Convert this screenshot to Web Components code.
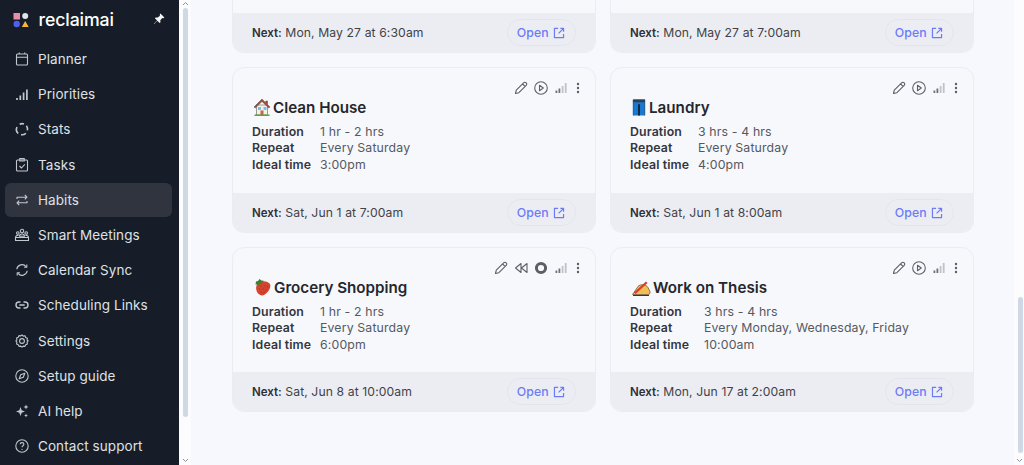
<!DOCTYPE html>
<html>
<head>
<meta charset="utf-8">
<title>Habits</title>
<style>
    html, body { margin: 0; height: 100%; overflow: hidden; }
    body { font-family: Inter, "Liberation Sans", sans-serif; background: #f6f8fd; }
</style>
</head>
<body>
<rm-app></rm-app>

<script>
const ICONS = {
    planner: '<rect x="2.500" y="3" width="11" height="11" rx="1"/><path d="M2.500 6.200h11M5.300 1.500V3M10.700 1.500V3"/>',
    priorities: '<path stroke-width="1.700" d="M3 14v-2M6.300 14V9.500M9.600 14V6.500M12.900 14V3.500"/>',
    stats: '<path stroke-width="1.600" d="M5.700 3.200A5.600 5.600 0 0 1 10 2.900M12.400 4.800a5.600 5.600 0 0 1 1 4.500M11.900 12.200a5.600 5.600 0 0 1-4.900 1.500M4.200 12.500A5.600 5.600 0 0 1 3 6"/>',
    tasks: '<rect x="2.500" y="3" width="11" height="11" rx="1"/><path d="M5.700 1.600h4.600V4H5.700zM5.500 9l2 2 3.300-3.600"/>',
    habits: '<path d="M3 7V5.200h9.500M10.800 3l2.200 2.200-2.200 2.200M13 9v1.800H3.500M5.200 13 3 10.800l2.200-2.200"/>',
    meetings: '<circle cx="8" cy="4" r="1.700"/><circle cx="3.800" cy="6" r="1.300"/><circle cx="12.200" cy="6" r="1.300"/><path d="M5.500 9.300c0-3 5-3 5 0zM1.500 10.500c0-1.800 1.600-2.400 3-2M14.500 10.500c0-1.800-1.600-2.400-3-2M1.500 10.500h13v3h-13z"/>',
    sync: '<path d="M2.800 7.200A5.200 5.200 0 0 1 12 4.600M13.200 8.800A5.200 5.200 0 0 1 4 11.400"/><path d="M12.800 2.500v2.700h-2.700M3.200 13.500v-2.700h2.700"/>',
    links: '<path stroke-width="1.400" d="M6.500 5H5a3 3 0 0 0 0 6h1.500M9.500 5H11a3 3 0 0 1 0 6H9.500M5.300 8h5.400"/>',
    settings: '<path d="m8 1.800 1.200 1.300 1.800-.3.700 1.700 1.700.7-.3 1.800L14.200 8l-1.100 1.200.3 1.800-1.700.7-.7 1.700-1.800-.3L8 14.200l-1.200-1.100-1.800.3-.7-1.700-1.700-.7.3-1.800L1.800 8l1.100-1.200-.3-1.800 1.700-.7.7-1.700 1.800.3z"/><circle cx="8" cy="8" r="2.400"/>',
    guide: '<circle cx="8" cy="8" r="6.200"/><path d="m10.800 5.200-1.500 4.100-4.100 1.500 1.500-4.100z"/>',
    ai: '<path fill="currentColor" stroke="none" d="m6.500 4 1.200 3.300L11 8.500 7.700 9.700 6.500 13 5.300 9.700 2 8.500l3.300-1.200zM12 1.500l.7 1.800 1.800.7-1.800.7-.7 1.800-.7-1.800-1.800-.7 1.800-.7zM12 10.500l.6 1.400 1.400.6-1.400.6-.6 1.400-.6-1.400-1.400-.6 1.400-.6z"/>',
    support: '<circle cx="8" cy="8" r="6.200"/><path d="M6.200 6.300C6.300 4 9.900 4.200 9.900 6.300c0 1.500-1.900 1.500-1.900 3"/><path stroke-linecap="round" d="M8 11.300v.1"/>',
    pencil: '<path d="m2.500 13.500.8-3.400 7.300-7.300a1.600 1.600 0 0 1 2.600 2.600l-7.300 7.300zM9.500 3.900l2.600 2.600"/>',
    play: '<circle cx="8" cy="8" r="6.300"/><path d="m6.500 5.300 3.800 2.700-3.800 2.700z"/>',
    rewind: '<path d="M8 3.500 2.500 8 8 12.500zM14 3.500 8.500 8l5.500 4.500z"/>',
    stop: '<circle cx="8" cy="8" r="4.600" stroke-width="3"/>',
    open: '<path stroke-width="1.400" d="M7 2.800H2.800v10.400h10.400V9"/><path stroke-width="1.400" d="M9.500 2.800h3.700v3.700M13 3 7.500 8.500"/>'
};

const svgIcon = (name, size) =>
    `<svg width="${size}" height="${size}" viewBox="0 0 16 16" fill="none" stroke="currentColor" stroke-width="1.100" stroke-linejoin="round">${ICONS[name]}</svg>`;

const EMOJI = {
    house: `<svg width="18" height="18" viewBox="0 0 18 18"><rect x="3.500" y="7" width="11" height="10" fill="#f4f1ea" stroke="#6a5d50" stroke-width=".6"/><path d="M9 1 1 9l1.200 1L9 3.500 15.800 10 17 9l-2.500-2.400V3h-1.800v1.900z" fill="#a5493a" stroke="#5b4a3e" stroke-width=".5"/><rect x="5" y="9" width="3" height="3" fill="#6ec3ea"/><rect x="10.500" y="9" width="3" height="3" fill="#6ec3ea"/><rect x="7.500" y="12.500" width="3" height="4.500" fill="#d65f42"/><rect x="1.500" y="16.500" width="15" height="1.500" fill="#4ea93f"/></svg>`,
    jeans: `<svg width="16" height="18" viewBox="0 0 17 18"><rect x="2" y="1" width="13" height="17" rx="1" fill="#1b78d0"/><rect x="2" y="1" width="13" height="3" fill="#2b3f55"/><path d="M7.500 6h2v12h-2z" fill="#12253a"/><path d="M2 4h1v14H2zM14 4h1v14h-1z" fill="#2f5f95"/></svg>`,
    berry: `<svg width="19" height="19" viewBox="0 0 19 19"><path d="M5 5c4-3 10-2 12 1 1.500 3-2 9-6 11-2 1-5.500 0-7-3C2.500 11 2.800 7 5 5z" fill="#d5442c"/><g fill="#8a2a1c"><circle cx="8" cy="8" r=".5"/><circle cx="12" cy="8" r=".5"/><circle cx="14.500" cy="9" r=".5"/><circle cx="6.500" cy="11" r=".5"/><circle cx="10" cy="11" r=".5"/><circle cx="13" cy="12" r=".5"/><circle cx="8" cy="14" r=".5"/><circle cx="11" cy="14.500" r=".5"/></g><path d="M2.500 6.500 3 3.500l2-.5L6.500 1l2 1.500 2.300.2-1.800 2-1.500.5-1.500 1.800-1.500-.8z" fill="#3f7f35"/></svg>`,
    thesis: `<svg width="20" height="19" viewBox="0 0 20 19"><path d="M1.500 16.500 7 8.500c2-2.500 8-2.500 10 1l2 4c.3 2-.5 3-2 3z" fill="#f3bd52" stroke="#5b4a38" stroke-width=".7"/><path d="m3 14.500 12-11 1.500 1.500-12 11z" fill="#d73a2c"/><path d="M2 17.500h16" stroke="#3e3530" stroke-width="1"/></svg>`
};

customElements.define("rm-nav-item", class extends HTMLElement {
    constructor() {
        super();
        this.attachShadow({ mode: 'open' });
    }

    connectedCallback() {
        this.shadowRoot.innerHTML = `
            <style>
                :host { display: flex; height: 35.2px; align-items: center; padding: 0 7px 0 5px; }
                #fila {
                    flex: 1; height: 34px; display: flex; align-items: center; gap: 8px;
                    padding-left: 9px; border-radius: 6px; color: #dfe1e5;
                }
                :host([active]) #fila { background: #30343e; }
                svg { color: #c3c6cc; flex: none; }
                span { font-size: 13.5px; letter-spacing: .08px; white-space: nowrap; }
            </style>
            <div id="fila">${svgIcon(this.getAttribute("icon"), 16)}<span><slot></slot></span></div>
        `;
    }
});

customElements.define("rm-sidebar", class extends HTMLElement {
    constructor() {
        super();
        this.attachShadow({ mode: 'open' });
    }

    connectedCallback() {
        this.shadowRoot.innerHTML = `
            <style>
                :host { display: block; width: 179px; flex: none; background: #171d28; overflow: hidden; }
                #logo { display: flex; align-items: center; height: 41.5px; padding-left: 13px; }
                #marca { color: #fff; font-size: 17.7px; font-weight: 500; letter-spacing: -.1px; margin-left: 9.5px; margin-top: -2px; flex: 1; }
                #pin { margin: -4px 14px 0 0; color: #f4f4f4; }
            </style>
            <div id="logo">
                <svg width="16" height="15" viewBox="0 0 16 15">
                    <rect x="0.500" y="0" width="6.500" height="6.500" fill="#e98ea8"/>
                    <circle cx="12.200" cy="3" r="3" fill="#dfe3ea"/>
                    <circle cx="3.700" cy="11" r="3.200" fill="#4f5ff0"/>
                    <path d="M12.200 8 15.700 14H8.800z" fill="#f5b53a"/>
                </svg>
                <span id="marca">reclaimai</span>
                <svg id="pin" width="12" height="12" viewBox="0 0 12 12" fill="currentColor">
                    <path d="M7.400.6 11.400 4.600 10.300 5.300 9.300 5 7.300 7.300 7.500 9.200 6.600 10 4.300 7.700 1.200 11 .9 10.700 4.100 7.500 1.900 5.300 2.700 4.400 4.700 4.600 7 2.700 6.700 1.700z"/>
                </svg>
            </div>
            <slot></slot>
        `;
    }
});

customElements.define("rm-scrollbar", class extends HTMLElement {
    constructor() {
        super();
        this.attachShadow({ mode: 'open' });
    }

    connectedCallback() {
        const inicio = this.getAttribute("inicio");
        const alto = this.getAttribute("alto");
        const flechas = this.hasAttribute("flechas");
        this.shadowRoot.innerHTML = `
            <style>
                :host {
                    display: block; flex: none; position: relative; background: #fcfcfe;
                    box-sizing: border-box; padding-top: ${inicio}px;
                }
                #thumb { height: ${alto}px; width: 5px; margin-left: var(--thumb-left, 4px); background: #cfd9e6; border-radius: 3px; }
                svg { position: absolute; left: var(--arrow-left, 3px); color: #8d9097; }
                #arriba { top: 1px; }
                #abajo { bottom: 2px; }
            </style>
            <div id="thumb"></div>
            ${flechas ? `<svg id="arriba" width="7" height="5" viewBox="0 0 7 5" fill="none" stroke="currentColor"><path d="M1 4 3.500 1.500 6 4"/></svg>` : ""}
            <svg id="abajo" width="7" height="5" viewBox="0 0 7 5" fill="none" stroke="currentColor"><path d="M1 1 3.500 3.500 6 1"/></svg>
        `;
    }
});

customElements.define("rm-open-button", class extends HTMLElement {
    constructor() {
        super();
        this.attachShadow({ mode: 'open' });
    }

    connectedCallback() {
        this.shadowRoot.innerHTML = `
            <style>
                :host {
                    display: inline-flex; align-items: center; gap: 3.500px; height: 27px; box-sizing: border-box;
                    width: 69px; justify-content: center; border: 1px solid #e3e5ec; border-radius: 14px;
                    color: #6b7cf6; font-size: 12.3px; font-weight: 500;
                }
            </style>
            Open ${svgIcon("open", 14)}
        `;
    }
});

customElements.define("rm-habit-card", class extends HTMLElement {
    constructor() {
        super();
        this.attachShadow({ mode: 'open' });
    }

    connectedCallback() {
        const d = (n) => this.getAttribute(n) || "";
        const acciones = d("acciones").split(" ").filter(Boolean);
        const partes = d("next").split("|");
        const cuerpo = this.hasAttribute("cortada") ? "" : `
            <div id="acciones">
                ${acciones.map(a => `<span class="ico">${svgIcon(a, 16)}</span>`).join("")}
                <svg class="barras" width="12" height="12" viewBox="0 0 12 12">
                    <path d="M.5 8.500h1.800V11H.5zM3.500 6.500h1.800V11H3.500z" fill="#6d7078"/>
                    <path d="M6.700 4h1.800v7H6.700zM9.800 1h1.800v10H9.800z" fill="#bfc2c9"/>
                </svg>
                <svg class="puntos" width="4" height="12" viewBox="0 0 4 12" fill="#5c5f67">
                    <circle cx="2" cy="2" r="1.200"/><circle cx="2" cy="6" r="1.200"/><circle cx="2" cy="10" r="1.200"/>
                </svg>
            </div>
            <h3>${EMOJI[d("emoji")]}<span>${d("titulo")}</span></h3>
            <div id="datos">
                <b>Duration</b><span>${d("duracion")}</span>
                <b>Repeat</b><span>${d("repite")}</span>
                <b>Ideal time</b><span>${d("hora")}</span>
            </div>
        `;
        this.shadowRoot.innerHTML = `
            <style>
                :host {
                    display: flex; flex-direction: column; box-sizing: border-box; min-width: 0;
                    background: #f7f8fc; border: 1px solid #eaecf1; border-radius: 12px; overflow: hidden;
                    color: #33363d; font-size: 13px;
                }
                :host([cortada]) { border-top: 0; border-radius: 0 0 12px 12px; }
                #cuerpo { flex: 1; padding: 0 0 0 19px; min-height: 0; }
                #acciones {
                    display: flex; justify-content: flex-end; align-items: center; height: 14px;
                    margin-top: 13px; padding-right: 15px; color: #5c5f67;
                }
                .ico { width: 20px; display: flex; justify-content: center; }
                .barras { margin-left: 4px; }
                .puntos { margin-left: 9px; }
                h3 {
                    margin: 0 0 0 1px; height: 24px; display: flex; align-items: center; gap: 2px;
                    font-size: 15.2px; font-weight: 600; color: #25272d;
                }
                h3 svg { flex: none; }
                #datos {
                    display: grid; grid-template-columns: var(--etiqueta, 68px) 1fr; grid-auto-rows: 16.5px;
                    align-items: center; margin-top: 4px; font-size: 12.3px; letter-spacing: .15px; color: #55585f;
                }
                #datos b { font-weight: 600; color: #33363d; }
                #pie {
                    height: 39px; flex: none; display: flex; align-items: center; justify-content: space-between;
                    background: #ecedf2; padding: 0 19px; font-size: 12.2px; letter-spacing: .1px; color: #3f4249;
                }
                #pie b { font-weight: 600; color: #2c2f36; font-size: 11.5px; letter-spacing: 0; }
            </style>
            <div id="cuerpo">${cuerpo}</div>
            <div id="pie">
                <span><b>${partes[0]}</b> ${partes[1]}</span>
                <rm-open-button></rm-open-button>
            </div>
        `;
    }
});

customElements.define("rm-app", class extends HTMLElement {
    constructor() {
        super();
        this.attachShadow({ mode: 'open' });
    }

    connectedCallback() {
        this.shadowRoot.innerHTML = `
            <style>
                :host { display: flex; height: 465px; width: 1024px; background: #f6f8fd; overflow: hidden; }
                #lateral { width: 12px; }
                #principal { width: 10px; --thumb-left: 4px; --arrow-left: 2px; }
                main {
                    flex: 1; min-width: 0; padding: 0 40px 0 41px; display: grid;
                    grid-template-columns: 1fr 1fr; grid-template-rows: 53px 166px 165px;
                    gap: 14px; align-content: start;
                }
                .ancha { --etiqueta: 74px; }
            </style>
            <rm-sidebar>
                <rm-nav-item icon="planner">Planner</rm-nav-item>
                <rm-nav-item icon="priorities">Priorities</rm-nav-item>
                <rm-nav-item icon="stats">Stats</rm-nav-item>
                <rm-nav-item icon="tasks">Tasks</rm-nav-item>
                <rm-nav-item icon="habits" active>Habits</rm-nav-item>
                <rm-nav-item icon="meetings">Smart Meetings</rm-nav-item>
                <rm-nav-item icon="sync">Calendar Sync</rm-nav-item>
                <rm-nav-item icon="links">Scheduling Links</rm-nav-item>
                <rm-nav-item icon="settings">Settings</rm-nav-item>
                <rm-nav-item icon="guide">Setup guide</rm-nav-item>
                <rm-nav-item icon="ai">AI help</rm-nav-item>
                <rm-nav-item icon="support">Contact support</rm-nav-item>
            </rm-sidebar>
            <rm-scrollbar id="lateral" inicio="8" alto="409" flechas></rm-scrollbar>
            <main>
                <rm-habit-card cortada next="Next:|Mon, May 27 at 6:30am"></rm-habit-card>
                <rm-habit-card cortada next="Next:|Mon, May 27 at 7:00am"></rm-habit-card>
                <rm-habit-card emoji="house" titulo="Clean House" duracion="1 hr - 2 hrs" repite="Every Saturday" hora="3:00pm"
                    acciones="pencil play" next="Next:|Sat, Jun 1 at 7:00am"></rm-habit-card>
                <rm-habit-card emoji="jeans" titulo="Laundry" duracion="3 hrs - 4 hrs" repite="Every Saturday" hora="4:00pm"
                    acciones="pencil play" next="Next:|Sat, Jun 1 at 8:00am"></rm-habit-card>
                <rm-habit-card emoji="berry" titulo="Grocery Shopping" duracion="1 hr - 2 hrs" repite="Every Saturday" hora="6:00pm"
                    acciones="pencil rewind stop" next="Next:|Sat, Jun 8 at 10:00am"></rm-habit-card>
                <rm-habit-card class="ancha" emoji="thesis" titulo="Work on Thesis" duracion="3 hrs - 4 hrs" repite="Every Monday, Wednesday, Friday" hora="10:00am"
                    acciones="pencil play" next="Next:|Mon, Jun 17 at 2:00am"></rm-habit-card>
            </main>
            <rm-scrollbar id="principal" inicio="297" alto="156"></rm-scrollbar>
        `;
    }
});
</script>
</body>
</html>
